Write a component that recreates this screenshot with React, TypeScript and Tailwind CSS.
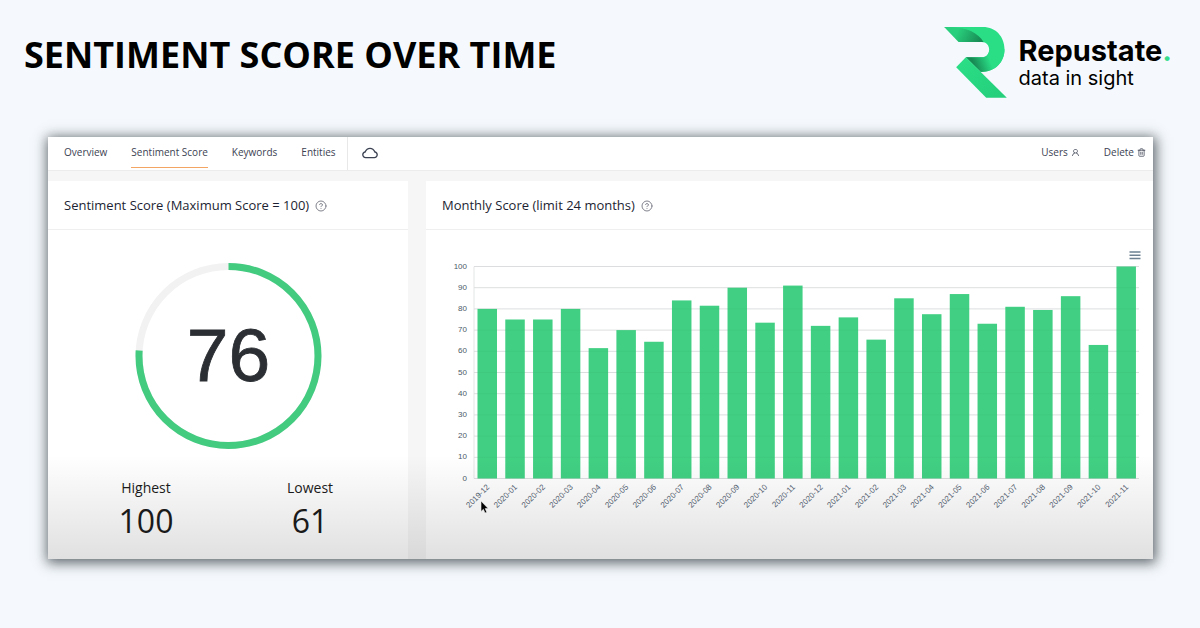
import React from "react";
import { CircleHelp, Trash2 } from "lucide-react";
import { AiOutlineCloud, AiOutlineUser } from "react-icons/ai";

const scores: [string, number][] = [
  ["2019-12", 80], ["2020-01", 75], ["2020-02", 75], ["2020-03", 80],
  ["2020-04", 61.5], ["2020-05", 70], ["2020-06", 64.5], ["2020-07", 84],
  ["2020-08", 81.5], ["2020-09", 90], ["2020-10", 73.5], ["2020-11", 91],
  ["2020-12", 72], ["2021-01", 76], ["2021-02", 65.5], ["2021-03", 85],
  ["2021-04", 77.5], ["2021-05", 87], ["2021-06", 73], ["2021-07", 81],
  ["2021-08", 79.5], ["2021-09", 86], ["2021-10", 63], ["2021-11", 100],
];
const ticks = [0, 10, 20, 30, 40, 50, 60, 70, 80, 90, 100];

const PLOT = { left: 48, right: 713, top: 36.5, bottom: 248.5 };
const STEP = 27.78;
const yOf = (v: number) => PLOT.bottom - (v / 100) * (PLOT.bottom - PLOT.top);

function Logo() {
  return (
    <div className="flex items-center gap-3">
      <svg viewBox="42 36 188 213" className="h-[71px] w-[63px]" role="img" aria-label="Repustate">
        <defs>
          <linearGradient id="fold" x1="85" y1="45" x2="150" y2="80" gradientUnits="userSpaceOnUse">
            <stop offset="0" stopColor="#29cf7c" />
            <stop offset="1" stopColor="#178a54" />
          </linearGradient>
          <linearGradient id="bowl" x1="132" y1="150" x2="178" y2="132" gradientUnits="userSpaceOnUse">
            <stop offset="0" stopColor="#178a54" />
            <stop offset="1" stopColor="#2ade86" />
          </linearGradient>
          <linearGradient id="leg" x1="90" y1="140" x2="200" y2="248" gradientUnits="userSpaceOnUse">
            <stop offset="0" stopColor="#2ade86" />
            <stop offset="1" stopColor="#25cf7b" />
          </linearGradient>
        </defs>
        <path d="M42 36H158C198 36 223 66 223 103C223 142 195 171 152 171L107 127H155C168 127 177 117 177 104C177 91 168 81 155 81Z" fill="#2ade86" />
        <path d="M107 127H155C168 127 177 117 177 104L223 103C223 142 195 171 152 171Z" fill="url(#bowl)" />
        <path d="M42 36C100 34 140 48 160 81H85Z" fill="url(#fold)" />
        <path d="M107 127L230 248H168L78 157Z" fill="url(#leg)" />
      </svg>
      <div className="font-['Inter',sans-serif] text-black">
        <p className="text-[29px] font-bold leading-[30px]">Repustate<span className="text-[#35dc8c]">.</span></p>
        <p className="text-xl leading-6">data in sight</p>
      </div>
    </div>
  );
}

function NavItem({ label, active = false }: { label: string; active?: boolean }) {
  return (
    <a
      href="#"
      aria-current={active ? "page" : undefined}
      className="flex h-[31px] flex-col"
    >
      <span className="flex grow items-center">{label}</span>
      <span className={active ? "h-px bg-[#f3a663]" : "h-px"} />
    </a>
  );
}

function CardTitle({ children }: { children: React.ReactNode }) {
  return (
    <header className="flex h-[49px] items-center gap-1.5 border-b border-[#efefef] px-4 pt-px">
      <h2 className="text-[13px] font-medium text-[#1d1f33]">{children}</h2>
      <button type="button" aria-label="Help" className="text-[#80828c]">
        <CircleHelp size={12} strokeWidth={2} />
      </button>
    </header>
  );
}

function Gauge({ value }: { value: number }) {
  return (
    <svg viewBox="0 0 188 188" className="mx-auto w-[188px]" role="img" aria-label="Sentiment score">
      <circle cx="94.5" cy="94" r="89.5" fill="none" stroke="#f2f2f2" strokeWidth="7" />
      <circle cx="94.5" cy="94" r="89.5" fill="none" stroke="#43cb80" strokeWidth="7" pathLength="100" strokeDasharray={`${value} 100`} transform="rotate(-90 94.5 94)" />
      <text x="94.5" y="119" textAnchor="middle" fontSize="75" fill="#2b2f33" stroke="#2b2f33" strokeWidth="0.8" className="font-['Liberation_Sans',sans-serif]">{value}</text>
    </svg>
  );
}

function Stat({ label, value }: { label: string; value: number }) {
  return (
    <div className="text-center text-[#1c1c1c]">
      <dt className="text-sm leading-5">{label}</dt>
      <dd className="text-[32px] leading-[46px]">{value}</dd>
    </div>
  );
}

function MonthlyChart() {
  return (
    <svg viewBox="0 0 727 300" className="w-full font-['Liberation_Sans',sans-serif]" role="img" aria-label="Monthly score">
      {ticks.map((t) => (
        <g key={t}>
          <line x1={PLOT.left} x2={PLOT.right} y1={yOf(t)} y2={yOf(t)} stroke="#e4e5e6" />
          <text x="41" y={yOf(t) + 2} textAnchor="end" fontSize="8" fill="#4b5a68">{t}</text>
        </g>
      ))}
      <line x1={PLOT.left} x2={PLOT.left} y1={PLOT.top} y2={PLOT.bottom} stroke="#e4e5e6" />
      {scores.map(([month, v], i) => {
        const x = 51.5 + i * STEP;
        return (
          <g key={month}>
            <rect x={x} y={yOf(v)} width="19.5" height={PLOT.bottom - yOf(v)} fill="#41d083" />
            <text x={x + 12.5} y="257.5" textAnchor="end" fontSize="8" fill="#566474" transform={`rotate(-45 ${x + 12.5} 257.5)`}>{month}</text>
          </g>
        );
      })}
      {ticks.map((t) => (
        <line key={t} x1={PLOT.left} x2={PLOT.right} y1={yOf(t)} y2={yOf(t)} stroke="#000" strokeOpacity="0.03" />
      ))}
      <path d="M703.5 22H714.5M703.5 25.25H714.5M703.5 28.5H714.5" stroke="#6e8192" strokeWidth="1.4" />
      <path d="M55 271V281.5L57.4 279.3L59 283L60.8 282.2L59.2 278.6H62.2Z" fill="#000" stroke="#fff" strokeWidth="0.6" />
    </svg>
  );
}

export default function App() {
  return (
    <div className="min-h-screen bg-[#f5f9fd] font-['Open_Sans',sans-serif]">
      <header className="flex items-start justify-between pl-6 pr-7 pt-[27px]">
        <h1 className="text-4xl font-bold leading-[56px] text-black">SENTIMENT SCORE OVER TIME</h1>
        <Logo />
      </header>
      <main className="relative ml-12 mr-[47px] mt-[39px] bg-[#f6f6f7] shadow-[1px_2px_12px_2px_rgba(30,40,45,0.7)]">
        <nav className="flex h-[34px] justify-between border-b border-[#ececec] bg-white pl-4 pr-[7px] text-[10px] font-medium text-[#3c4252]">
          <div className="flex">
            <div className="flex gap-6 border-r border-[#e8e8e8] pr-[11px]">
              <NavItem label="Overview" />
              <NavItem label="Sentiment Score" active />
              <NavItem label="Keywords" />
              <NavItem label="Entities" />
            </div>
            <button type="button" aria-label="Cloud" className="flex h-[31px] items-center px-[13px]">
              <AiOutlineCloud size={18} />
            </button>
          </div>
          <div className="flex h-[31px] gap-6">
            <button type="button" className="flex items-center gap-[3px]">Users <AiOutlineUser size={9} /></button>
            <button type="button" className="flex items-center gap-[3px]">Delete <Trash2 size={9} /></button>
          </div>
        </nav>
        <div className="mt-[10px] grid grid-cols-[360fr_727fr] gap-[18px]">
          <section className="bg-white">
            <CardTitle>Sentiment Score (Maximum Score = 100)</CardTitle>
            <div className="pt-8"><Gauge value={76} /></div>
            <dl className="grid grid-cols-2 px-4 pb-[15px] pt-7">
              <Stat label="Highest" value={100} />
              <Stat label="Lowest" value={61} />
            </dl>
          </section>
          <section className="bg-white">
            <CardTitle>Monthly Score (limit 24 months)</CardTitle>
            <MonthlyChart />
          </section>
        </div>
        <div className="pointer-events-none absolute inset-x-0 bottom-0 h-[104px] bg-linear-to-b from-transparent to-black/12" />
      </main>
    </div>
  );
}
